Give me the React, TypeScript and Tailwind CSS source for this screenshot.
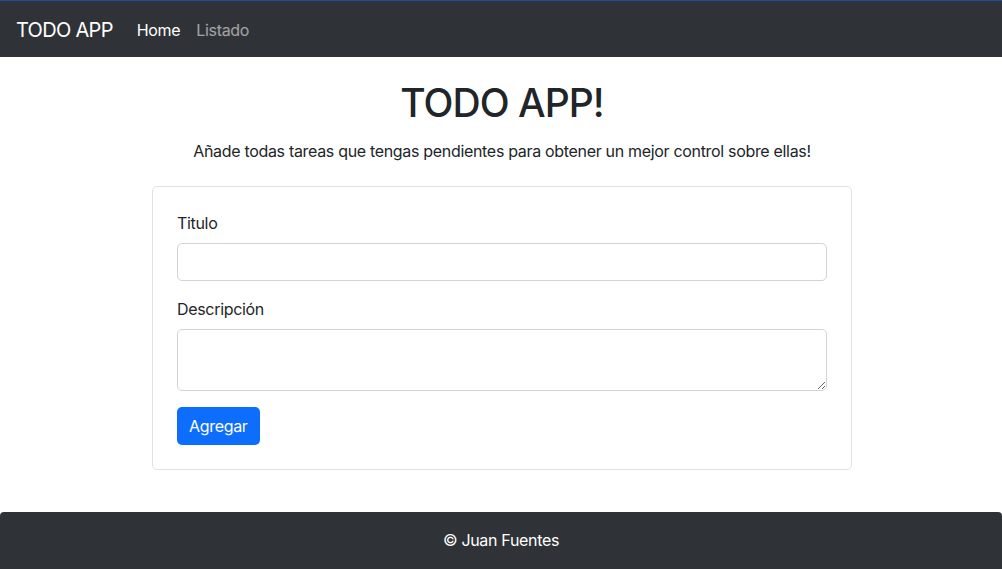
import React from 'react';

const App: React.FC = () => {
  return (
    <div className="min-h-screen bg-white text-[#212529] font-['Inter','Noto_Sans',sans-serif] tracking-[-0.02em] flex flex-col">
      {/* Navbar */}
      <nav className="h-[57px] bg-[#2f3337] border-t border-[#1b4f9c] flex items-center px-4 pt-[2px]">
        <a className="text-white text-[20px] tracking-[-0.035em] mr-[24px] leading-none">TODO APP</a>
        <div className="flex items-center gap-4 text-[16px]">
          <a className="text-white">Home</a>
          <a className="text-white/55">Listado</a>
        </div>
      </nav>

      <main className="pt-[23px] pl-[2px]">
        <h1 className="text-center text-[39px] font-medium leading-[1.2] tracking-[-0.025em]">TODO APP!</h1>
        <p className="text-center text-[16px] leading-6 mt-[12px]">
          Añade todas tareas que tengas pendientes para obtener un mejor control sobre ellas!
        </p>

        <div className="w-[700px] mx-auto mt-[23px] border border-[#dee2e6] rounded-[5px] p-6">
          <label className="block text-[16px] leading-6 mb-2">Titulo</label>
          <input
            type="text"
            className="block w-full h-[38px] border border-[#ced4da] rounded-[5px] px-3 outline-none"
          />
          <label className="block text-[16px] leading-6 mt-4 mb-2">Descripción</label>
          <textarea className="block w-full h-[62px] border border-[#ced4da] rounded-[5px] px-3 py-1.5 outline-none resize-y" />
          <button className="mt-4 h-[38px] px-3 bg-[#0d6efd] text-white text-[16px] rounded-[5px]">
            Agregar
          </button>
        </div>
      </main>

      <footer className="mt-[42px] h-[57px] bg-[#2f3337] rounded-t-[4px] flex items-center justify-center text-white text-[16px]">
        © Juan Fuentes
      </footer>
    </div>
  );
};

export default App;
